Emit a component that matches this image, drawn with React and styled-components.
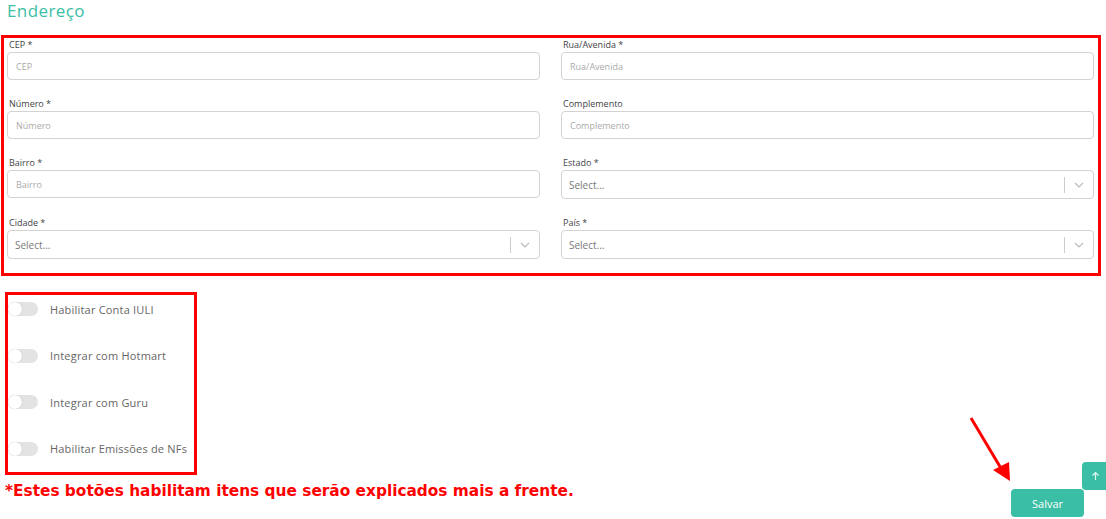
import React from "react";
import styled, { createGlobalStyle } from "styled-components";

const teal = "#3bbea6";

const Global = createGlobalStyle`
  html, body {
    margin: 0;
    padding: 0;
    background: #fff;
    font-family: "Open Sans", "Liberation Sans", sans-serif;
  }
  * { box-sizing: border-box; }
`;

const Page = styled.div`
  position: relative;
  width: 1106px;
  height: 519px;
  overflow: hidden;
`;

const Title = styled.div`
  color: ${teal};
  font-size: 17px;
  line-height: 22px;
  padding: 0 0 0 7px;
  height: 35px;
  letter-spacing: 0.4px;
`;

const RedBox = styled.div`
  border: 3px solid #ff0000;
  margin-left: 1px;
  width: 1100px;
  padding: 1px 4px 14px 3px;
  display: grid;
  grid-template-columns: 1fr 1fr;
  column-gap: 21px;
  row-gap: 18px;
`;

const Field = styled.div`
  display: flex;
  flex-direction: column;
`;

const Label = styled.label`
  font-size: 9px;
  line-height: 12px;
  color: #444;
  padding-left: 2px;
  margin-bottom: 1px;
`;

const Input = styled.input`
  height: 28px;
  border: 1px solid #d3d3d3;
  border-radius: 4px;
  padding: 0 8px;
  font-family: inherit;
  font-size: 9px;
  color: #333;
  outline: none;
  &::placeholder {
    color: #aaa;
  }
`;

const SelectBox = styled.div`
  height: 29px;
  border: 1px solid #d3d3d3;
  border-radius: 4px;
  display: flex;
  align-items: center;
  padding-left: 7px;
  font-size: 10px;
  color: #777;
`;

const SelectText = styled.span`
  flex: 1;
`;

const Sep = styled.span`
  width: 1px;
  height: 16px;
  background: #ccc;
`;

const Chevron = styled.span`
  width: 28px;
  display: flex;
  justify-content: center;
  align-items: center;
`;

const ToggleBox = styled.div`
  margin: 16px 0 0 5px;
  width: 192px;
  height: 183px;
  border: 3px solid #ff0000;
  display: flex;
  flex-direction: column;
  justify-content: space-between;
  padding: 6px 0 15px 0;
`;

const ToggleRow = styled.div`
  display: flex;
  align-items: center;
  gap: 12px;
  height: 16px;
`;

const Track = styled.span`
  position: relative;
  width: 30px;
  height: 14px;
  border-radius: 7px;
  background: #e3e3e3;
  &::after {
    content: "";
    position: absolute;
    left: 0;
    top: 0;
    width: 14px;
    height: 14px;
    border-radius: 50%;
    background: #fff;
    box-shadow: 0 0 1px rgba(0, 0, 0, 0.25);
  }
`;

const ToggleLabel = styled.span`
  font-size: 11px;
  color: #666;
  letter-spacing: 0.2px;
`;

const Bottom = styled.div`
  display: flex;
  justify-content: space-between;
  align-items: flex-start;
  padding: 0 22px 0 5px;
`;

const Note = styled.div`
  color: #ff0000;
  font-family: "DejaVu Sans", Verdana, sans-serif;
  font-weight: bold;
  font-size: 15.35px;
  line-height: 20px;
  margin-top: 6px;
`;

const SaveButton = styled.button`
  width: 73px;
  height: 28px;
  border: none;
  border-radius: 4px;
  background: ${teal};
  color: #fff;
  font-family: inherit;
  font-size: 11px;
  margin-top: 14px;
`;

const ScrollTop = styled.div`
  position: absolute;
  left: 1082px;
  top: 462px;
  width: 26px;
  height: 28px;
  border-radius: 4px 0 0 4px;
  background: ${teal};
  display: flex;
  align-items: center;
  justify-content: center;
`;

const Arrow = styled.svg`
  position: absolute;
  left: 960px;
  top: 410px;
`;

const fields = [
  { label: "CEP *", ph: "CEP" },
  { label: "Rua/Avenida *", ph: "Rua/Avenida" },
  { label: "Número *", ph: "Número" },
  { label: "Complemento", ph: "Complemento" },
  { label: "Bairro *", ph: "Bairro" },
  { label: "Estado *", select: true },
  { label: "Cidade *", select: true },
  { label: "País *", select: true },
];

const toggles = [
  "Habilitar Conta IULI",
  "Integrar com Hotmart",
  "Integrar com Guru",
  "Habilitar Emissões de NFs",
];

const App = () => {
  return (
    <Page>
      <Global />
      <Title>Endereço</Title>
      <RedBox>
        {fields.map((f) => (
          <Field key={f.label}>
            <Label>{f.label}</Label>
            {f.select ? (
              <SelectBox>
                <SelectText>Select...</SelectText>
                <Sep />
                <Chevron>
                  <svg width="10" height="6" viewBox="0 0 10 6">
                    <path d="M1 1l4 4 4-4" fill="none" stroke="#bbb" strokeWidth="1.2" />
                  </svg>
                </Chevron>
              </SelectBox>
            ) : (
              <Input placeholder={f.ph} />
            )}
          </Field>
        ))}
      </RedBox>
      <ToggleBox>
        {toggles.map((t) => (
          <ToggleRow key={t}>
            <Track />
            <ToggleLabel>{t}</ToggleLabel>
          </ToggleRow>
        ))}
      </ToggleBox>
      <Bottom>
        <Note>*Estes botões habilitam itens que serão explicados mais a frente.</Note>
        <SaveButton>Salvar</SaveButton>
      </Bottom>
      <ScrollTop>
        <svg width="9" height="10" viewBox="0 0 9 10">
          <path d="M4.5 9V1.5M1.5 4.5l3-3 3 3" fill="none" stroke="#dff5f0" strokeWidth="1.2" />
        </svg>
      </ScrollTop>
      <Arrow width="60" height="80" viewBox="0 0 60 80">
        <line x1="11" y1="8" x2="42" y2="60" stroke="#ff0000" strokeWidth="3" />
        <polygon points="33,60 50,71 49,52" fill="#ff0000" />
      </Arrow>
    </Page>
  );
};

export default App;
